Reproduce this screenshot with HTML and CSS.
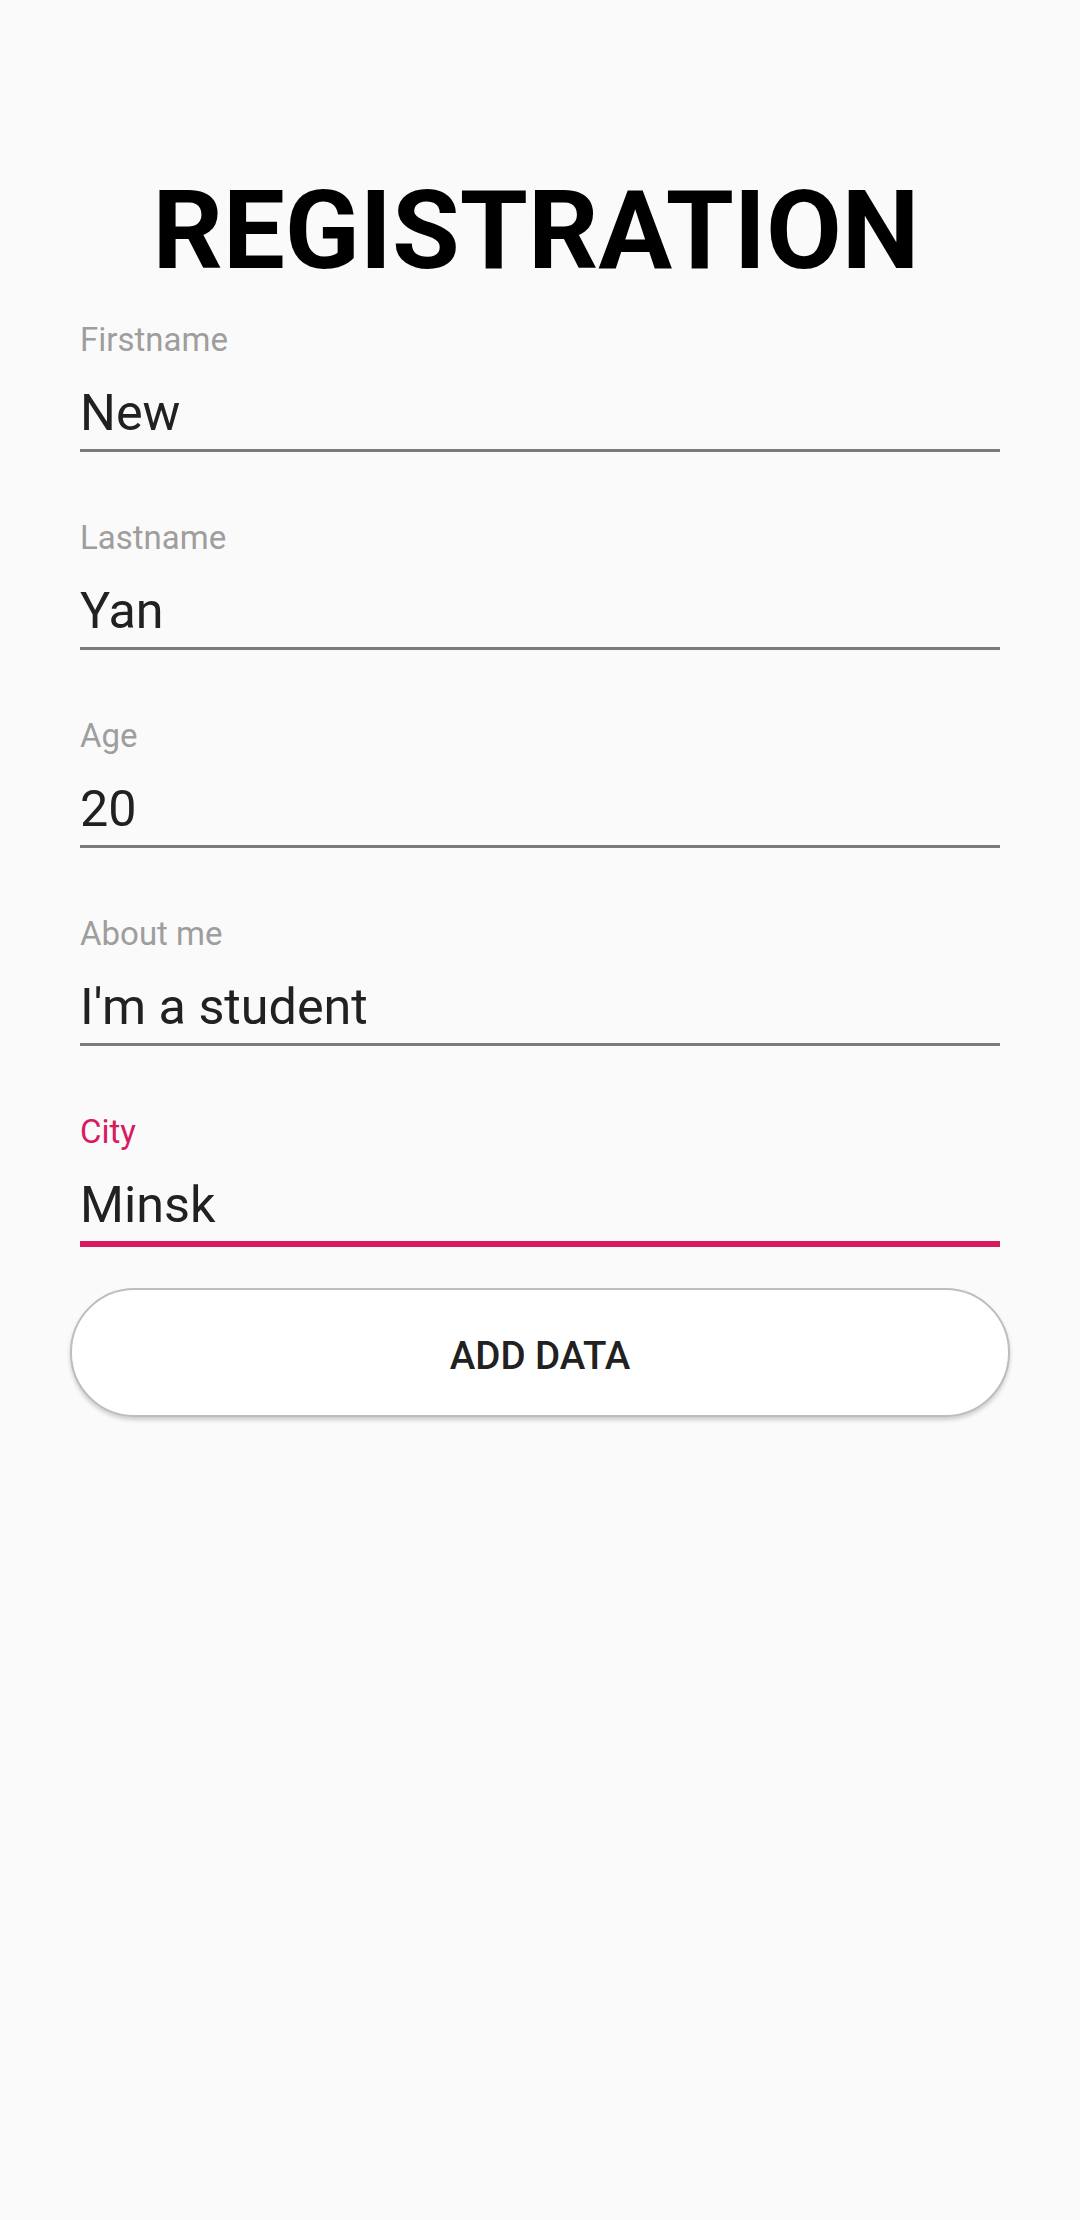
FILE: index.html
```html
<!DOCTYPE html>
<html>
<head>
<meta charset="utf-8">
<link rel="stylesheet" href="styles.css">
</head>
<body>
<div class="screen">
  <h1 class="title">REGISTRATION</h1>
  <div class="form">
    <div class="field">
      <div class="label">Firstname</div>
      <div class="value">New</div>
    </div>
    <div class="field">
      <div class="label">Lastname</div>
      <div class="value">Yan</div>
    </div>
    <div class="field">
      <div class="label">Age</div>
      <div class="value">20</div>
    </div>
    <div class="field">
      <div class="label">About me</div>
      <div class="value">I'm a student</div>
    </div>
    <div class="field focused">
      <div class="label">City</div>
      <div class="value">Minsk</div>
    </div>
  </div>
  <div class="actions">
    <button class="btn">ADD DATA</button>
  </div>
</div>
</body>
</html>
```
FILE: styles.css
```css
html, body {
  margin: 0;
  padding: 0;
  background: #fafafa;
}
body {
  width: 1080px;
  height: 2220px;
  font-family: Roboto, "Liberation Sans", sans-serif;
}
.screen {
  display: flex;
  flex-direction: column;
}
.title {
  margin: 166px 0 0 0;
  font-size: 110px;
  font-weight: 700;
  line-height: 129px;
  color: #000;
  text-align: center;
  transform: translateX(-4px);
}
.form {
  margin-top: 25px;
  padding: 0 80px;
  display: flex;
  flex-direction: column;
  gap: 66px;
}
.field {
  display: flex;
  flex-direction: column;
  gap: 24px;
  padding-bottom: 7px;
  border-bottom: 3px solid #7b7b7b;
}
.label {
  font-size: 33px;
  line-height: 40px;
  color: #9e9e9e;
}
.value {
  font-size: 50.3px;
  line-height: 58px;
  color: #212121;
}
.field.focused {
  border-bottom: 6px solid #d81b60;
}
.field.focused .label {
  color: #d81b60;
}
.actions {
  padding: 41px 70px 0 70px;
}
.btn {
  display: block;
  width: 100%;
  height: 129px;
  box-sizing: border-box;
  background: #ffffff;
  border: 2px solid #bdbdbd;
  border-radius: 65px;
  box-shadow: 0 3px 4px rgba(0,0,0,0.18);
  font-family: Roboto, "Liberation Sans", sans-serif;
  font-size: 38.5px;
  font-weight: 500;
  color: #212121;
  padding: 5px 0 0 0;
}
```
